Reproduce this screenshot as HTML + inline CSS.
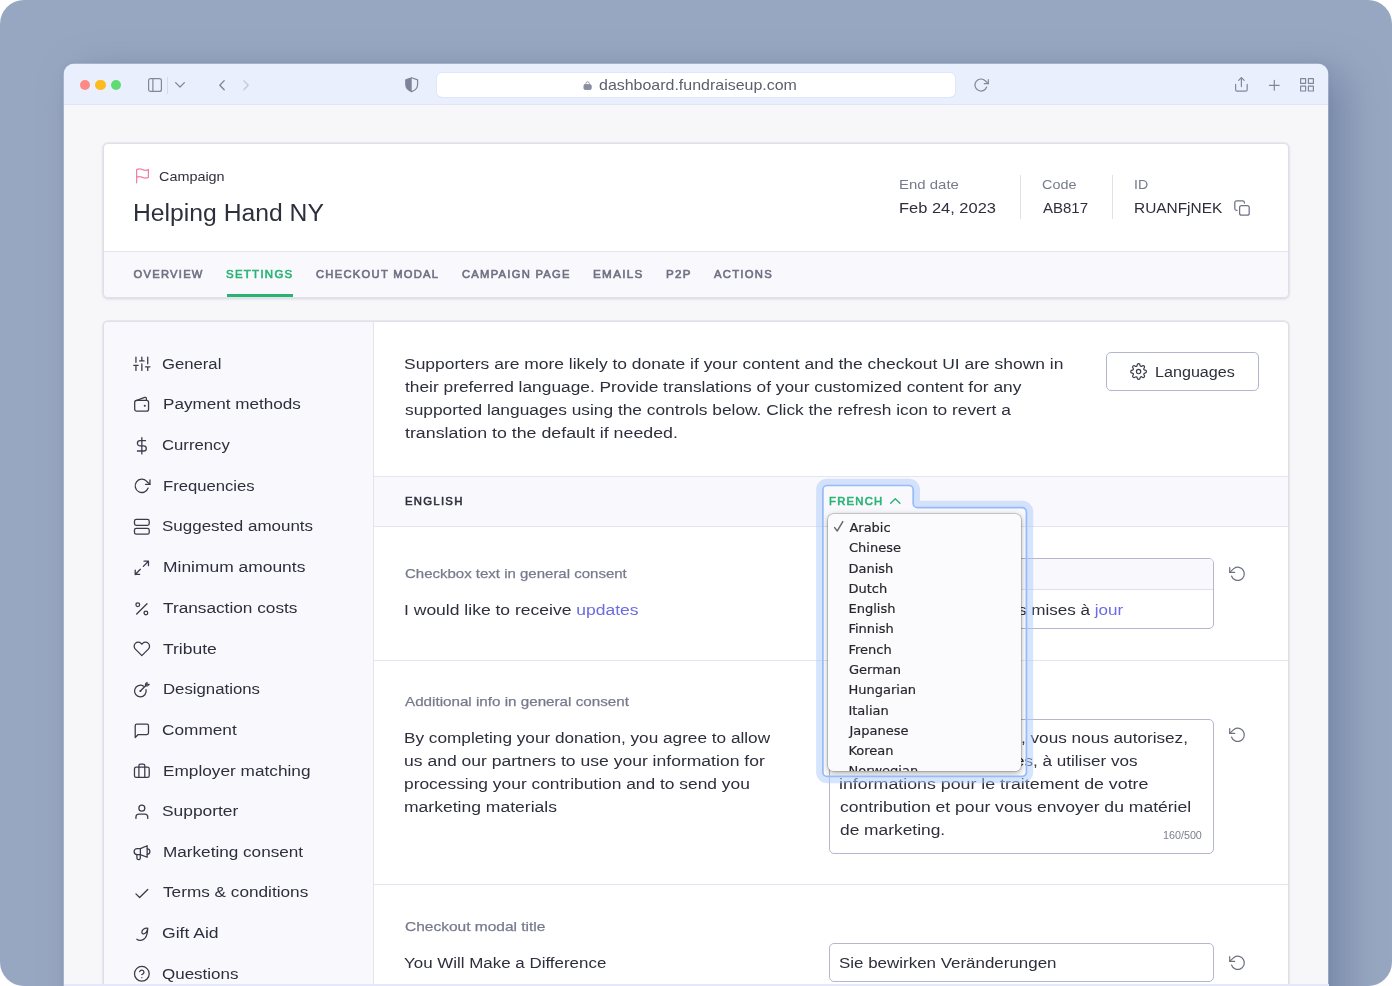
<!DOCTYPE html>
<html lang="en">
<head>
<meta charset="utf-8">
<title>Helping Hand NY – Campaign settings – Fundraise Up</title>
<style>
*{box-sizing:border-box}
html,body{margin:0;padding:0;width:1392px;height:986px;overflow:hidden}
body{width:1392px;height:986px;overflow:hidden;background:#fff;position:relative;font-family:"Liberation Sans",sans-serif;color:#2d2f3c}
.abs,.t,svg.i{position:absolute}
.t{white-space:nowrap;line-height:0;transform-origin:0 50%;display:block}
.t a{color:#6b6be2;text-decoration:none}
ul,li,nav,header,main,section,aside{margin:0;padding:0;list-style:none;display:block}
svg.i{fill:none;stroke:currentColor;stroke-linecap:round;stroke-linejoin:round;overflow:visible}
.bg{left:0;top:0;width:1392px;height:986px;background:#98a7c1;border-radius:24px;overflow:hidden}
.win{left:64.2px;top:64.2px;width:1264px;height:960px;border-radius:10px;background:#f7f7fa;
  box-shadow:0 0 0 .5px rgba(235,240,252,.55),16px 10px 40px rgba(56,76,120,.36),0 0 6px rgba(56,76,120,.08)}
.toolbar{left:64.2px;top:64.2px;width:1264px;height:40.8px;background:#e9effd;border-radius:10px 10px 0 0;border-bottom:1px solid #e0e6f8}
.dot{width:10.6px;height:10.6px;border-radius:50%;top:79.6px}
.urlbar{left:437px;top:73px;width:518px;height:23.5px;background:#fff;border-radius:5px;box-shadow:0 0 0 .5px rgba(200,210,240,.6)}
.tb{color:#83879b}
.card{background:#fff;border:1px solid #e0e0e8;border-radius:5px}
.hcard{left:102.9px;top:143.1px;width:1186px;height:154.7px;box-shadow:0 0 0 .8px rgba(226,226,234,.95),0 1px 3px rgba(40,45,80,.13),0 1px 2px rgba(40,45,80,.06);overflow:hidden}
.htabs{left:0;top:106.9px;width:1187px;height:47px;background:#f9f9fd;border-top:1px solid #e3e4ee}
.uline{left:226.75px;top:294.2px;width:65.75px;height:3.3px;background:#27b373}
.vdiv{width:1px;background:#e0e1ea;top:174.5px;height:44.5px}
.mcard{left:102.9px;top:321.2px;width:1186px;height:700px;overflow:hidden;box-shadow:0 0 0 .8px rgba(226,226,234,.95),0 1px 3px rgba(40,45,80,.08)}
.side{left:0;top:0;width:270.3px;height:700px;background:#f9f9fd;border-right:1px solid #e3e4ee}
.band{left:374px;top:476px;width:914px;height:50.5px;background:#f9f9fd;border-top:1px solid #e4e5ef;border-bottom:1px solid #e4e5ef}
.hr{left:374px;width:914px;height:1px;background:#e4e5ef}
.btn{left:1106px;top:352px;width:153px;height:39px;border:1px solid #b3b6cf;border-radius:5px;background:#fff}
.box{left:828.5px;width:385px;border:1px solid #b5b7cd;border-radius:5px;background:#fff;overflow:hidden}
.boxbar{left:0;top:0;width:385px;height:31.5px;background:#f9f9fd;border-bottom:1px solid #dfe0ea}
.ic{color:#3a3c4a}
.rf{color:#6d7080}
.popclip{left:823.7px;top:508.4px;width:201.9px;height:267.2px;overflow:hidden}
.pop{left:4.6px;top:5.4px;width:192.8px;height:256.8px;background:#fbfbfe;border-radius:5.5px;
  box-shadow:0 0 0 .6px rgba(0,0,0,.24),0 2.500px 7px rgba(0,0,0,.28),0 0 3px rgba(0,0,0,.14)}
#app{position:absolute;left:0;top:0;width:1392px;height:986px;overflow:hidden;will-change:transform}
.botline{left:64px;top:984.4px;width:1264.5px;height:2px;background:#e3e8fa}
</style>
</head>
<body>
<div id="app">
<div class="abs bg"></div>
<div class="abs win"></div>

<!-- ===================== browser toolbar ===================== -->
<header>
<div class="abs toolbar"></div>
<div class="abs dot" style="left:79.8px;background:#fe8a86"></div>
<div class="abs dot" style="left:95.4px;background:#febb1f"></div>
<div class="abs dot" style="left:110.9px;background:#5edc73"></div>
<!-- sidebar toggle -->
<svg class="i tb" style="left:148px;top:78px" width="14" height="14" viewBox="0 0 14 14" stroke-width="1.2"><rect x=".6" y=".6" width="12.8" height="12.8" rx="2"/><line x1="4.9" y1=".6" x2="4.9" y2="13.4"/></svg>
<div class="abs" style="left:167px;top:76.5px;width:1px;height:17px;background:#d5dbee"></div>
<svg class="i tb" style="left:175px;top:81.5px" width="10" height="6" viewBox="0 0 10 6" stroke-width="1.3"><polyline points=".6,.6 5,5 9.4,.6"/></svg>
<svg class="i" style="left:218.5px;top:79.8px;color:#7e8297" width="6" height="10.4" viewBox="0 0 6 10.4" stroke-width="1.3"><polyline points="5.2,.6 .8,5.2 5.2,9.8"/></svg>
<svg class="i" style="left:243.2px;top:79.8px;color:#c3c8da" width="6" height="10.4" viewBox="0 0 6 10.4" stroke-width="1.3"><polyline points=".8,.6 5.2,5.2 .8,9.8"/></svg>
<!-- shield -->
<svg class="i" style="left:404.8px;top:77.3px;color:#7f8398" width="13.4" height="15.4" viewBox="0 0 13.4 15.4" stroke-width="1.2"><path d="M6.7.7 12.6 2.9V7.4c0 3.4-2.5 5.9-5.9 7.2C3.3 13.3.8 10.8.8 7.4V2.9Z"/><path d="M6.7.7 .8 2.9V7.4c0 3.4 2.5 5.9 5.9 7.2Z" fill="currentColor" stroke="none"/></svg>
<div class="abs urlbar"></div>
<!-- lock -->
<svg class="i" style="left:583.8px;top:81.2px;color:#8a8ea2" width="7.2" height="8.6" viewBox="0 0 7.2 8.6" stroke="none"><rect x="0" y="3.7" width="7.2" height="4.7" rx="1" fill="currentColor"/><path d="M1.9 4V2.500a1.700 1.700 0 0 1 3.400 0V4" fill="none" stroke="currentColor" stroke-width=".9"/></svg>
<span class="t" style="left:599.29px;top:85.33px;font-size:15px;color:#5c5f6e;transform:scaleX(1.0641);">dashboard.fundraiseup.com</span>
<!-- reload -->
<svg class="i tb" style="left:973.3px;top:76.7px" width="16" height="16" viewBox="0 0 24 24" stroke-width="1.8"><path d="M23 4v6h-6"/><path d="M20.490 15a9 9 0 1 1-2.120-9.360L23 10"/></svg>
<!-- share -->
<svg class="i tb" style="left:1234.6px;top:77.4px" width="12.8" height="14.8" viewBox="0 0 12.8 14.8" stroke-width="1.2"><path d="M.6 7.4v5.2a1.6 1.6 0 0 0 1.6 1.6h8.4a1.6 1.6 0 0 0 1.6-1.6V7.4"/><line x1="6.4" y1=".8" x2="6.4" y2="9.6"/><polyline points="3.6,3.4 6.4,.6 9.2,3.4"/></svg>
<!-- plus -->
<svg class="i tb" style="left:1269px;top:79.6px" width="10.6" height="10.6" viewBox="0 0 10.6 10.6" stroke-width="1.2"><line x1="5.3" y1=".4" x2="5.3" y2="10.2"/><line x1=".4" y1="5.3" x2="10.2" y2="5.3"/></svg>
<!-- grid -->
<svg class="i tb" style="left:1300.4px;top:78.3px" width="14" height="13.6" viewBox="0 0 14 13.6" stroke-width="1.2" stroke-linejoin="miter"><rect x=".6" y=".6" width="5" height="4.8"/><rect x="8.4" y=".6" width="5" height="4.8"/><rect x=".6" y="8.2" width="5" height="4.8"/><rect x="8.4" y="8.2" width="5" height="4.8"/></svg>
</header>

<!-- ===================== campaign header card ===================== -->
<section>
<div class="abs card hcard"><div class="abs htabs"></div></div>
<!-- flag -->
<svg class="i" style="left:135px;top:168px;color:#f27fa6" width="15" height="15.4" viewBox="0 0 15 15.4" stroke-width="1.25"><path d="M1.6 9.4s.8-.8 3-.8 3.6 1.5 5.8 1.5 3-.8 3-.8V1.5s-.8.8-3 .8S6.800 .8 4.600 .8s-3 .8-3 .8Z"/><line x1="1.6" y1="14.8" x2="1.6" y2="9.4"/></svg>
<span class="t" style="left:158.72px;top:176.81px;font-size:13.6px;color:#2d2f3c;transform:scaleX(1.0588);">Campaign</span>
<span class="t" style="left:132.87px;top:212.66px;font-size:23.0px;color:#2d2f3c;transform:scaleX(1.0743);">Helping Hand NY</span>
<span class="t" style="left:898.95px;top:185.16px;font-size:13.6px;color:#767a8c;transform:scaleX(1.1000);">End date</span>
<span class="t" style="left:898.84px;top:208.10px;font-size:15.5px;color:#2d2f3c;transform:scaleX(1.0610);">Feb 24, 2023</span>
<span class="t" style="left:1042.27px;top:184.61px;font-size:13.6px;color:#767a8c;transform:scaleX(1.0583);">Code</span>
<span class="t" style="left:1043.08px;top:207.75px;font-size:15.5px;color:#2d2f3c;transform:scaleX(0.9678);">AB817</span>
<span class="t" style="left:1133.95px;top:184.61px;font-size:13.6px;color:#767a8c;transform:scaleX(1.0421);">ID</span>
<span class="t" style="left:1134.47px;top:207.75px;font-size:15.5px;color:#2d2f3c;transform:scaleX(0.9950);">RUANFjNEK</span>
<div class="abs vdiv" style="left:1019.5px"></div>
<div class="abs vdiv" style="left:1111.5px"></div>
<!-- copy -->
<svg class="i" style="left:1233.6px;top:199.6px;color:#6f7285" width="16" height="16" viewBox="0 0 16 16" stroke-width="1.25"><rect x="5.6" y="5.6" width="9.6" height="9.6" rx="2"/><path d="M3 10.400H2.600a1.800 1.800 0 0 1-1.800-1.800V2.600a1.800 1.800 0 0 1 1.800-1.800h6a1.800 1.800 0 0 1 1.800 1.800V3"/></svg>
<nav>
<span class="t" style="left:133.58px;top:273.79px;font-size:11.2px;color:#6d7082;letter-spacing:1.25px;-webkit-text-stroke:.6px currentColor;">OVERVIEW</span>
<span class="t" style="left:226.41px;top:273.79px;font-size:11.2px;color:#27b373;letter-spacing:1.25px;-webkit-text-stroke:.6px currentColor;transform:scaleX(1.0237);">SETTINGS</span>
<span class="t" style="left:315.76px;top:273.79px;font-size:11.2px;color:#6d7082;letter-spacing:1.25px;-webkit-text-stroke:.6px currentColor;transform:scaleX(1.0031);">CHECKOUT MODAL</span>
<span class="t" style="left:461.67px;top:273.79px;font-size:11.2px;color:#6d7082;letter-spacing:1.25px;-webkit-text-stroke:.6px currentColor;transform:scaleX(1.0027);">CAMPAIGN PAGE</span>
<span class="t" style="left:593.09px;top:273.79px;font-size:11.2px;color:#6d7082;letter-spacing:1.25px;-webkit-text-stroke:.6px currentColor;transform:scaleX(1.0439);">EMAILS</span>
<span class="t" style="left:665.54px;top:273.79px;font-size:11.2px;color:#6d7082;letter-spacing:1.25px;-webkit-text-stroke:.6px currentColor;transform:scaleX(1.0383);">P2P</span>
<span class="t" style="left:713.9px;top:273.79px;font-size:11.2px;color:#6d7082;letter-spacing:1.25px;-webkit-text-stroke:.6px currentColor;transform:scaleX(1.0084);">ACTIONS</span>
<div class="abs uline"></div>
</nav>
</section>

<!-- ===================== main card ===================== -->
<main>
<div class="abs card mcard"><div class="abs side"></div></div>
<aside>
<svg class="i ic" style="left:133.35px;top:355.35px" width="17.7" height="17.7" viewBox="0 0 24 24" stroke-width="1.75"><path d="M4 21v-7M4 10V3M12 21v-9M12 8V3M20 21v-5M20 12V3M1 14h6M9 8h6M17 16h6"/></svg>
<svg class="i ic" style="left:133.35px;top:394.65px" width="17.7" height="17.7" viewBox="0 0 24 24" stroke-width="1.75"><rect x="2.300" y="7.300" width="18.800" height="14.600" rx="2.600"/><path d="M3.400 8 15.800 3.300Q18.200 2.600 18.200 5V7.300"/><circle cx="16" cy="14.600" r="1.450" fill="currentColor" stroke="none"/></svg>
<svg class="i ic" style="left:133.35px;top:436.65px" width="17.7" height="17.7" viewBox="0 0 24 24" stroke-width="1.75"><path d="M12 1v22M17 5H9.5a3.5 3.5 0 0 0 0 7h5a3.5 3.5 0 0 1 0 7H6"/></svg>
<svg class="i ic" style="left:133.35px;top:477.45px" width="17.7" height="17.7" viewBox="0 0 24 24" stroke-width="1.75"><path d="M23 4v6h-6"/><path d="M20.490 15a9 9 0 1 1-2.120-9.360L23 10"/></svg>
<svg class="i ic" style="left:133.35px;top:518.15px" width="17.7" height="17.7" viewBox="0 0 24 24" stroke-width="1.75"><rect x="2" y="2" width="20" height="8" rx="2.4"/><rect x="2" y="14" width="20" height="8" rx="2.4"/></svg>
<svg class="i ic" style="left:133.35px;top:558.95px" width="17.7" height="17.7" viewBox="0 0 24 24" stroke-width="1.75"><path d="M15 3h6v6M9 21H3v-6M21 3l-7 7M3 21l7-7"/></svg>
<svg class="i ic" style="left:133.35px;top:599.70px" width="17.7" height="17.7" viewBox="0 0 24 24" stroke-width="1.75"><path d="M19 5 5 19"/><circle cx="6.5" cy="6.5" r="2.5"/><circle cx="17.5" cy="17.5" r="2.5"/></svg>
<svg class="i ic" style="left:133.35px;top:640.05px" width="17.7" height="17.7" viewBox="0 0 24 24" stroke-width="1.75"><path d="M20.840 4.610a5.500 5.500 0 0 0-7.780 0L12 5.670l-1.060-1.060a5.500 5.500 0 0 0-7.780 7.780l1.060 1.060L12 21.230l7.780-7.780 1.060-1.060a5.500 5.500 0 0 0 0-7.780Z"/></svg>
<svg class="i ic" style="left:133.35px;top:681.15px" width="17.7" height="17.7" viewBox="0 0 24 24" stroke-width="1.75"><path d="M14.190 6.900A7.900 7.900 0 1 0 17.700 11.820"/><path d="M10 13.600 18.800 4.800"/><circle cx="10" cy="13.600" r="1.350" fill="currentColor" stroke="none"/><path d="M16.900 6.700V3.900L19.100 1.700V4.500H22.100L19.900 6.700Z" stroke-width="1.400"/></svg>
<svg class="i ic" style="left:133.35px;top:721.75px" width="17.7" height="17.7" viewBox="0 0 24 24" stroke-width="1.75"><path d="M21 15a2 2 0 0 1-2 2H7l-4 4V5a2 2 0 0 1 2-2h14a2 2 0 0 1 2 2Z"/></svg>
<svg class="i ic" style="left:133.35px;top:762.20px" width="17.7" height="17.7" viewBox="0 0 24 24" stroke-width="1.75"><rect x="2" y="7" width="20" height="14" rx="2.4"/><path d="M16 21V5a2 2 0 0 0-2-2h-4a2 2 0 0 0-2 2v16"/></svg>
<svg class="i ic" style="left:133.35px;top:802.95px" width="17.7" height="17.7" viewBox="0 0 24 24" stroke-width="1.75"><path d="M20 21v-2a4 4 0 0 0-4-4H8a4 4 0 0 0-4 4v2"/><circle cx="12" cy="7" r="4"/></svg>
<svg class="i ic" style="left:133.35px;top:843.55px" width="17.7" height="17.7" viewBox="0 0 24 24" stroke-width="1.75"><path d="M10 6.200H5.600a4.100 4.100 0 0 0 0 8.200H10L19.200 18V2.400L10 6.200V14.400"/><path d="M19.200 6.600a3.700 3.700 0 0 1 0 7.400"/><path d="M5.300 14.400V19a2.300 2.300 0 0 0 4.600 0V14.400"/></svg>
<svg class="i ic" style="left:133.35px;top:884.55px" width="17.7" height="17.7" viewBox="0 0 24 24" stroke-width="1.75"><path d="M20 6 9 17l-5-5"/></svg>
<svg class="i ic" style="left:133.35px;top:924.65px" width="17.7" height="17.7" viewBox="0 0 24 24" stroke-width="1.75"><path d="M19.600 4.600C16.300 3.500 12.200 6.100 12 9.500 11.900 13 17 12.600 18.700 8.900L20 4.300C19.800 10.100 19 14.600 16.300 17.900 13.300 21.400 8.100 21.800 5.200 19.400"/></svg>
<svg class="i ic" style="left:133.35px;top:965.35px" width="17.7" height="17.7" viewBox="0 0 24 24" stroke-width="1.75"><circle cx="12" cy="12" r="10"/><path d="M9.090 9a3 3 0 0 1 5.830 1c0 2-3 3-3 3"/><circle cx="12" cy="17.2" r=".9" fill="currentColor" stroke="none"/></svg>
<span class="t" style="left:162.04px;top:364.20px;font-size:15.5px;color:#2d2f3c;transform:scaleX(1.0760);">General</span>
<span class="t" style="left:162.7px;top:403.95px;font-size:15.5px;color:#2d2f3c;transform:scaleX(1.1037);">Payment methods</span>
<span class="t" style="left:162.33px;top:444.55px;font-size:15.5px;color:#2d2f3c;transform:scaleX(1.0772);">Currency</span>
<span class="t" style="left:162.62px;top:486.10px;font-size:15.5px;color:#2d2f3c;transform:scaleX(1.0743);">Frequencies</span>
<span class="t" style="left:162.41px;top:526.05px;font-size:15.5px;color:#2d2f3c;transform:scaleX(1.0958);">Suggested amounts</span>
<span class="t" style="left:162.55px;top:566.65px;font-size:15.5px;color:#2d2f3c;transform:scaleX(1.1242);">Minimum amounts</span>
<span class="t" style="left:162.68px;top:607.55px;font-size:15.5px;color:#2d2f3c;transform:scaleX(1.1120);">Transaction costs</span>
<span class="t" style="left:162.68px;top:648.90px;font-size:15.5px;color:#2d2f3c;transform:scaleX(1.1278);">Tribute</span>
<span class="t" style="left:162.61px;top:688.95px;font-size:15.5px;color:#2d2f3c;transform:scaleX(1.0816);">Designations</span>
<span class="t" style="left:162.03px;top:729.55px;font-size:15.5px;color:#2d2f3c;transform:scaleX(1.1119);">Comment</span>
<span class="t" style="left:162.69px;top:771.10px;font-size:15.5px;color:#2d2f3c;transform:scaleX(1.1116);">Employer matching</span>
<span class="t" style="left:162.38px;top:810.95px;font-size:15.5px;color:#2d2f3c;transform:scaleX(1.1209);">Supporter</span>
<span class="t" style="left:162.56px;top:852.20px;font-size:15.5px;color:#2d2f3c;transform:scaleX(1.1062);">Marketing consent</span>
<span class="t" style="left:162.68px;top:892.05px;font-size:15.5px;color:#2d2f3c;transform:scaleX(1.1091);">Terms &amp; conditions</span>
<span class="t" style="left:162.11px;top:932.65px;font-size:15.5px;color:#2d2f3c;transform:scaleX(1.1325);">Gift Aid</span>
<span class="t" style="left:162.05px;top:974.10px;font-size:15.5px;color:#2d2f3c;transform:scaleX(1.0955);">Questions</span>
</aside>

<section>
<span class="t" style="left:403.65px;top:364.15px;font-size:15.5px;color:#2d2f3c;transform:scaleX(1.1255);">Supporters are more likely to donate if your content and the checkout UI are shown in</span>
<span class="t" style="left:404.67px;top:386.65px;font-size:15.5px;color:#2d2f3c;transform:scaleX(1.1177);">their preferred language. Provide translations of your customized content for any</span>
<span class="t" style="left:405.07px;top:409.65px;font-size:15.5px;color:#2d2f3c;transform:scaleX(1.1178);">supported languages using the controls below. Click the refresh icon to revert a</span>
<span class="t" style="left:404.67px;top:432.65px;font-size:15.5px;color:#2d2f3c;transform:scaleX(1.1474);">translation to the default if needed.</span>
<div class="abs btn"></div>
<!-- gear -->
<svg class="i ic" style="left:1129.6px;top:362.8px" width="17.2" height="17.2" viewBox="0 0 24 24" stroke-width="1.7"><circle cx="12" cy="12" r="3"/><path d="M19.4 15a1.650 1.650 0 0 0 .33 1.820l.06.06a2 2 0 1 1-2.830 2.830l-.06-.06a1.650 1.650 0 0 0-1.820-.33 1.650 1.650 0 0 0-1 1.510V21a2 2 0 0 1-4 0v-.09A1.650 1.650 0 0 0 9 19.400a1.650 1.650 0 0 0-1.820.33l-.06.06a2 2 0 1 1-2.830-2.830l.06-.06a1.650 1.650 0 0 0 .33-1.820 1.650 1.650 0 0 0-1.510-1H3a2 2 0 0 1 0-4h.09A1.650 1.650 0 0 0 4.600 9a1.650 1.650 0 0 0-.33-1.820l-.06-.06a2 2 0 1 1 2.830-2.830l.06.06a1.650 1.650 0 0 0 1.820.33H9a1.650 1.650 0 0 0 1-1.510V3a2 2 0 0 1 4 0v.09a1.650 1.650 0 0 0 1 1.510 1.650 1.650 0 0 0 1.820-.33l.06-.06a2 2 0 1 1 2.830 2.830l-.06.06a1.650 1.650 0 0 0-.33 1.820V9a1.650 1.650 0 0 0 1.510 1H21a2 2 0 0 1 0 4h-.09a1.650 1.650 0 0 0-1.510 1Z"/></svg>
<span class="t" style="left:1154.87px;top:372.00px;font-size:15.5px;color:#2d2f3c;transform:scaleX(1.0411);">Languages</span>

<div class="abs band"></div>
<span class="t" style="left:405.18px;top:501.24px;font-size:11.2px;color:#2d2f3c;letter-spacing:1.25px;-webkit-text-stroke:.55px currentColor;transform:scaleX(1.0134);">ENGLISH</span>
<span class="t" style="left:828.82px;top:501.24px;font-size:11.2px;color:#27b373;letter-spacing:1.25px;-webkit-text-stroke:.6px currentColor;transform:scaleX(1.0074);">FRENCH</span>
<!-- chevron up -->
<svg class="i" style="left:890.3px;top:498.4px;color:#27b373" width="10.6" height="6" viewBox="0 0 10.6 6" stroke-width="1.4"><polyline points=".7,5.3 5.3,.8 9.9,5.3"/></svg>

<!-- row 1 -->
<span class="t" style="left:405.25px;top:574.06px;font-size:13.6px;color:#767a8c;-webkit-text-stroke:.25px currentColor;transform:scaleX(1.1031);">Checkbox text in general consent</span>
<span class="t" style="left:404.05px;top:610.15px;font-size:15.5px;color:#2d2f3c;transform:scaleX(1.1298);">I would like to receive <a>updates</a></span>
<div class="abs box" style="top:557.5px;height:71.5px"><div class="abs boxbar"></div></div>
<span class="t" style="left:1017.53px;top:610.10px;font-size:15.5px;color:#2d2f3c;transform:scaleX(1.1007);">s mises à <a>jour</a></span>
<svg class="i rf" style="left:1228.8px;top:566.2px" width="16.4" height="15.4" viewBox="0 0 16.4 15.4" stroke-width="1.2"><path d="M2.500 10A6.600 6.600 0 1 0 5 2.400L.7 6.400"/><polyline points=".7,1.500 .7,6.400 5.700,6.400"/></svg>
<div class="abs hr" style="top:659.8px"></div>

<!-- row 2 -->
<span class="t" style="left:404.92px;top:701.71px;font-size:13.6px;color:#767a8c;-webkit-text-stroke:.25px currentColor;transform:scaleX(1.1180);">Additional info in general consent</span>
<span class="t" style="left:403.75px;top:738.00px;font-size:15.5px;color:#2d2f3c;transform:scaleX(1.1093);">By completing your donation, you agree to allow</span>
<span class="t" style="left:403.78px;top:760.55px;font-size:15.5px;color:#2d2f3c;transform:scaleX(1.1316);">us and our partners to use your information for</span>
<span class="t" style="left:404.01px;top:783.85px;font-size:15.5px;color:#2d2f3c;transform:scaleX(1.1211);">processing your contribution and to send you</span>
<span class="t" style="left:403.96px;top:806.85px;font-size:15.5px;color:#2d2f3c;transform:scaleX(1.1312);">marketing materials</span>
<div class="abs box" style="top:718.5px;height:135.5px"></div>
<span class="t" style="left:1021.4px;top:738.10px;font-size:15.5px;color:#2d2f3c;transform:scaleX(1.1073);">, vous nous autorisez,</span>
<span class="t" style="left:1015.31px;top:761.10px;font-size:15.5px;color:#2d2f3c;transform:scaleX(1.1022);">es, à utiliser vos</span>
<span class="t" style="left:839.0px;top:783.75px;font-size:15.5px;color:#2d2f3c;transform:scaleX(1.1473);">informations pour le traitement de votre</span>
<span class="t" style="left:839.97px;top:806.85px;font-size:15.5px;color:#2d2f3c;transform:scaleX(1.1322);">contribution et pour vous envoyer du matériel</span>
<span class="t" style="left:839.97px;top:829.95px;font-size:15.5px;color:#2d2f3c;transform:scaleX(1.1192);">de marketing.</span>
<span class="t" style="left:1162.73px;top:835.65px;font-size:10px;color:#7c7f8e;transform:scaleX(1.0742);">160/500</span>
<svg class="i rf" style="left:1228.8px;top:727.2px" width="16.400" height="15.4" viewBox="0 0 16.4 15.4" stroke-width="1.2"><path d="M2.500 10A6.600 6.600 0 1 0 5 2.400L.7 6.400"/><polyline points=".7,1.500 .7,6.400 5.700,6.400"/></svg>
<div class="abs hr" style="top:884.2px"></div>

<!-- row 3 -->
<span class="t" style="left:404.85px;top:927.06px;font-size:13.6px;color:#767a8c;-webkit-text-stroke:.25px currentColor;transform:scaleX(1.1396);">Checkout modal title</span>
<span class="t" style="left:404.28px;top:963.15px;font-size:15.5px;color:#2d2f3c;transform:scaleX(1.0922);">You Will Make a Difference</span>
<div class="abs box" style="top:943.3px;height:38.5px"></div>
<span class="t" style="left:838.61px;top:962.65px;font-size:15.5px;color:#2d2f3c;transform:scaleX(1.0927);">Sie bewirken Veränderungen</span>
<svg class="i rf" style="left:1228.8px;top:954.8px" width="16.4" height="15.4" viewBox="0 0 16.4 15.4" stroke-width="1.2"><path d="M2.500 10A6.600 6.600 0 1 0 5 2.400L.7 6.400"/><polyline points=".7,1.500 .7,6.400 5.700,6.400"/></svg>
</section>

<!-- ===================== highlight ring + language dropdown ===================== -->
<div class="abs popclip"><div class="abs pop" role="listbox"></div></div>
<svg class="i" style="left:0;top:0" width="1392" height="986" viewBox="0 0 1392 986" stroke-linejoin="round"><defs><clipPath id="ringclip"><path clip-rule="evenodd" d="M0 0H1392V986H0Z M827.1 485.5H909.0A4.2 4.2 0 0 1 913.2 489.7V503.40000000000003A4.2 4.2 0 0 0 917.4000000000001 507.6H1022.2A4.2 4.2 0 0 1 1026.4 511.8V772.1999999999999A4.2 4.2 0 0 1 1022.2 776.4H827.1A4.2 4.2 0 0 1 822.9 772.1999999999999V489.7A4.2 4.2 0 0 1 827.1 485.5Z"/></clipPath></defs><path d="M827.1 485.5H909.0A4.2 4.2 0 0 1 913.2 489.7V503.40000000000003A4.2 4.2 0 0 0 917.4000000000001 507.6H1022.2A4.2 4.2 0 0 1 1026.4 511.8V772.1999999999999A4.2 4.2 0 0 1 1022.2 776.4H827.1A4.2 4.2 0 0 1 822.9 772.1999999999999V489.7A4.2 4.2 0 0 1 827.1 485.5Z" stroke="#adc9fb" stroke-opacity=".5" stroke-width="13.6" clip-path="url(#ringclip)"/><path d="M827.1 485.5H909.0A4.2 4.2 0 0 1 913.2 489.7V503.40000000000003A4.2 4.2 0 0 0 917.4000000000001 507.6H1022.2A4.2 4.2 0 0 1 1026.4 511.8V772.1999999999999A4.2 4.2 0 0 1 1022.2 776.4H827.1A4.2 4.2 0 0 1 822.9 772.1999999999999V489.7A4.2 4.2 0 0 1 827.1 485.5Z" stroke="#94bbfa" stroke-width="1.7"/></svg>
<!-- check -->
<svg class="i" style="left:834px;top:521.4px;color:#68686e" width="9.4" height="11" viewBox="0 0 9.4 11" stroke-width="1.5" stroke-linecap="butt"><path d="M.6 6.6 3.300 10 8.800 .6"/></svg>
<div class="abs" style="left:828.3px;top:513.2px;width:193px;height:257.6px;overflow:hidden;border-radius:5.5px"><div class="abs" style="left:-828.3px;top:-513.2px">
<span class="t" style="left:849.42px;top:527.62px;font-size:13px;color:#26262e;font-family:'DejaVu Sans', 'Liberation Sans', sans-serif;-webkit-text-stroke:.2px currentColor;">Arabic</span>
<span class="t" style="left:848.98px;top:547.88px;font-size:13px;color:#26262e;font-family:'DejaVu Sans', 'Liberation Sans', sans-serif;-webkit-text-stroke:.2px currentColor;">Chinese</span>
<span class="t" style="left:848.47px;top:568.90px;font-size:13px;color:#26262e;font-family:'DejaVu Sans', 'Liberation Sans', sans-serif;-webkit-text-stroke:.2px currentColor;">Danish</span>
<span class="t" style="left:848.47px;top:589.18px;font-size:13px;color:#26262e;font-family:'DejaVu Sans', 'Liberation Sans', sans-serif;-webkit-text-stroke:.2px currentColor;">Dutch</span>
<span class="t" style="left:848.47px;top:608.70px;font-size:13px;color:#26262e;font-family:'DejaVu Sans', 'Liberation Sans', sans-serif;-webkit-text-stroke:.2px currentColor;">English</span>
<span class="t" style="left:848.47px;top:628.97px;font-size:13px;color:#26262e;font-family:'DejaVu Sans', 'Liberation Sans', sans-serif;-webkit-text-stroke:.2px currentColor;">Finnish</span>
<span class="t" style="left:848.47px;top:649.99px;font-size:13px;color:#26262e;font-family:'DejaVu Sans', 'Liberation Sans', sans-serif;-webkit-text-stroke:.2px currentColor;">French</span>
<span class="t" style="left:848.98px;top:669.50px;font-size:13px;color:#26262e;font-family:'DejaVu Sans', 'Liberation Sans', sans-serif;-webkit-text-stroke:.2px currentColor;">German</span>
<span class="t" style="left:848.47px;top:689.77px;font-size:13px;color:#26262e;font-family:'DejaVu Sans', 'Liberation Sans', sans-serif;-webkit-text-stroke:.2px currentColor;">Hungarian</span>
<span class="t" style="left:848.44px;top:710.79px;font-size:13px;color:#26262e;font-family:'DejaVu Sans', 'Liberation Sans', sans-serif;-webkit-text-stroke:.2px currentColor;">Italian</span>
<span class="t" style="left:849.41px;top:731.06px;font-size:13px;color:#26262e;font-family:'DejaVu Sans', 'Liberation Sans', sans-serif;-webkit-text-stroke:.2px currentColor;">Japanese</span>
<span class="t" style="left:848.47px;top:750.59px;font-size:13px;color:#26262e;font-family:'DejaVu Sans', 'Liberation Sans', sans-serif;-webkit-text-stroke:.2px currentColor;">Korean</span>
<span class="t" style="left:848.47px;top:770.86px;font-size:13px;color:#26262e;font-family:'DejaVu Sans', 'Liberation Sans', sans-serif;-webkit-text-stroke:.2px currentColor;">Norwegian</span>
</div></div>
</main>
<div class="abs botline"></div>
</div>
</body>
</html>
